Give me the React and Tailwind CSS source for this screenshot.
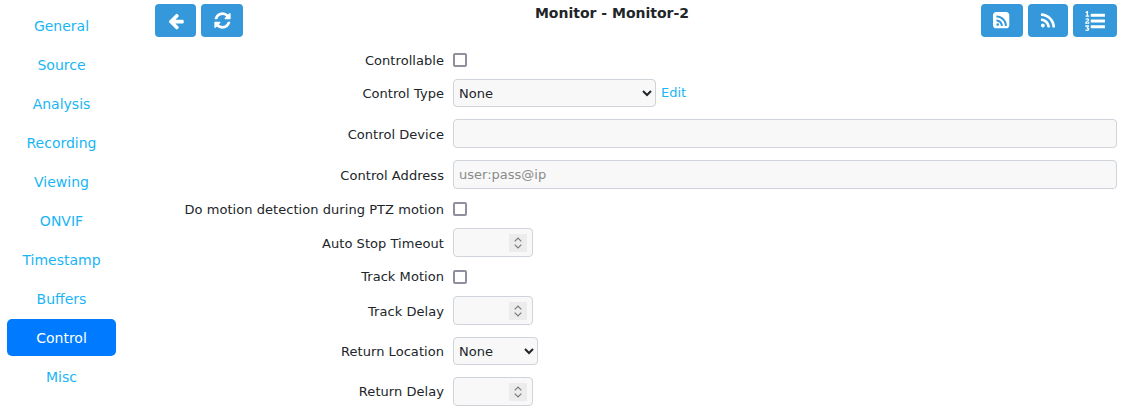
import React from "react";

const tabs = ["General","Source","Analysis","Recording","Viewing","ONVIF","Timestamp","Buffers","Control","Misc"];

const Icon = ({ size = 18, d }) => (
  <svg width={size} height={size} viewBox="0 0 1792 1792" fill="currentColor" aria-hidden="true"><path d={d} /></svg>
);

const ARROW = "M1664 896v128q0 53-32.5 90.5t-84.5 37.5h-704l293 294q38 36 38 90t-38 90l-75 76q-37 37-90 37-52 0-91-37l-651-652q-37-37-37-90 0-52 37-91l651-650q38-38 91-38 52 0 90 38l75 74q38 38 38 91t-38 91l-293 293h704q52 0 84.5 37.5t32.5 90.5z";
const REFRESH = "M1639 1056q0 5-1 7-64 268-268 434.5t-478 166.5q-146 0-282.5-55t-243.5-157l-129 129q-19 19-45 19t-45-19-19-45v-448q0-26 19-45t45-19h448q26 0 45 19t19 45-19 45l-137 137q71 66 161 102t187 36q134 0 250-65t186-179q11-17 53-117 8-23 30-23h192q13 0 22.5 9.5t9.5 22.5zm25-800v448q0 26-19 45t-45 19h-448q-26 0-45-19t-19-45 19-45l138-138q-148-137-349-137-134 0-250 65t-186 179q-11 17-53 117-8 23-30 23h-199q-13 0-22.5-9.5t-9.5-22.5v-7q65-268 270-434.5t480-166.5q146 0 284 55.5t245 156.5l130-129q19-19 45-19t45 19 19 45z";
const RSS_SQUARE = "M576 1280q0-53-37.5-90.5t-90.5-37.5-90.5 37.5-37.5 90.5 37.5 90.5 90.5 37.5 90.5-37.5 37.5-90.5zm352 94q-13-232-177-396t-396-177q-14-1-24 9t-10 23v128q0 13 8.5 22t21.5 10q154 11 264 121t121 264q1 13 10 21.5t22 8.5h128q13 0 23-10t9-24zm384 1q-5-154-56-297.5t-139.5-260-205-205-260-139.5-297.5-56q-14-1-23 9-10 10-10 23v128q0 13 9 22t22 10q204 7 378 111.5t278.5 278.5 111.5 378q1 13 10 22t22 9h128q13 0 23-10 11-9 9-23zm224-991v960q0 119-84.5 203.5t-203.5 84.5h-960q-119 0-203.5-84.5t-84.5-203.5v-960q0-119 84.5-203.5t203.5-84.5h960q119 0 203.5 84.5t84.5 203.5z";
const RSS = "M576 1344q0 80-56 136t-136 56-136-56-56-136 56-136 136-56 136 56 56 136zm512 123q2 28-17 48-18 21-47 21h-135q-25 0-43-16.5t-20-41.5q-22-229-184.5-391.5t-391.5-184.5q-25-2-41.5-20t-16.5-43v-135q0-29 21-47 17-17 43-17h5q160 13 306 80.5t259 181.5q114 113 181.5 259t80.5 306zm512 2q2 27-18 47-18 20-46 20h-143q-26 0-44.5-17.5t-19.5-42.5q-12-215-101-408.5t-231.5-336-336-231.5-408.5-102q-25-1-42.5-19.5t-17.5-43.5v-143q0-28 20-46 18-18 44-18h3q262 13 501.5 120t425.5 294q187 186 294 425.5t120 501.5z";
const LIST_OL = "M381 1620q0 80-54.5 126t-135.5 46q-106 0-172-66l57-88q49 45 106 45 29 0 50.5-14.5t21.5-42.5q0-64-105-56l-26-56q8-10 32.5-43.5t42.5-54 37-38.5v-1q-16 0-48.5 1t-48.5 1v53h-106v-152h333v88l-95 115q51 12 81 49t30 88zm2-627v159h-362q-6-36-6-54 0-51 23.5-93t56.5-68 66-47.5 56.5-43.5 23.5-45q0-25-14.5-38.5t-39.5-13.5q-46 0-81 58l-85-59q24-51 71.5-79.5t105.5-28.5q73 0 123 41.5t50 112.5q0 50-34 91.5t-75 64.5-75.5 50.5-35.5 52.5h127v-60h105zm1409 319v192q0 13-9.5 22.5t-22.5 9.5h-1216q-13 0-22.5-9.5t-9.5-22.5v-192q0-14 9-23t23-9h1216q13 0 22.5 9.5t9.5 22.5zm-1408-899v99h-335v-99h107q0-41 .5-122t.5-121v-12h-2q-8 17-50 54l-71-76 136-127h106v404h108zm1408 387v192q0 13-9.5 22.5t-22.5 9.5h-1216q-13 0-22.5-9.5t-9.5-22.5v-192q0-14 9-23t23-9h1216q13 0 22.5 9.5t9.5 22.5zm0-512v192q0 13-9.5 22.5t-22.5 9.5h-1216q-13 0-22.5-9.5t-9.5-22.5v-192q0-13 9.5-22.5t22.5-9.5h1216q13 0 22.5 9.5t9.5 22.5z";

const Btn = ({ w, children }) => (
  <button className={`${w} h-[33px] flex items-center justify-center rounded-[4px] bg-[#3498db] text-white`}>{children}</button>
);

const Row = ({ label, h, low, children }) => (
  <div className={`flex items-center ${h}`}>
    <label className={`w-[289px] shrink-0 text-right text-[13px] tracking-[0.05px] text-[#212529] ${low ? "pt-[2px]" : "pt-[1px]"}`}>{label}</label>
    <div className="ml-[9px] flex flex-1 items-center">{children}</div>
  </div>
);

const Check = () => (
  <input type="checkbox" className="h-[14px] w-[14px] appearance-none rounded-[2px] border-2 border-[#8f8f9d] bg-white" />
);

const boxCls = "rounded-[4px] border border-[#ced4da] bg-[#f8f8f8] text-[13px] text-[#212529]";

const Num = () => (
  <div className="relative h-[29px] w-[80px]">
    <input type="number" className={`${boxCls} h-full w-full appearance-none px-[5px] outline-none [appearance:textfield] [&::-webkit-inner-spin-button]:appearance-none`} />
    <span className="absolute left-[56px] top-[6px] flex h-[18px] w-[18px] flex-col items-center justify-center gap-[2px] bg-[#ececec]">
      <svg width="8" height="5" viewBox="0 0 8 5" fill="none" stroke="#7a7a7a" strokeWidth="1.2"><path d="M0.7 4.3 4 1l3.3 3.3" /></svg>
      <svg width="8" height="5" viewBox="0 0 8 5" fill="none" stroke="#7a7a7a" strokeWidth="1.2"><path d="M0.7 0.7 4 4l3.3-3.3" /></svg>
    </span>
  </div>
);

export default function App() {
  return (
    <div className="flex h-screen overflow-hidden bg-white font-['DejaVu_Sans',sans-serif]">
      <nav className="w-[155px] shrink-0 pl-[7px] pt-[7px]">
        <ul className="flex w-[109px] flex-col gap-[2px]">
          {tabs.map((t) => (
            <li key={t} className={`flex h-[37px] items-center justify-center rounded-[5px] pt-[1px] text-[14px] ${t === "Control" ? "bg-[#007bff] text-white" : "text-[#19b5f5]"}`}>{t}</li>
          ))}
        </ul>
      </nav>
      <main className="flex-1 pr-[12px]">
        <header className="relative flex h-[47px] items-start justify-between pt-[4px]">
          <div className="flex gap-[5px]">
            <Btn w="w-[41px]"><Icon d={ARROW} /></Btn>
            <Btn w="w-[42px]"><Icon d={REFRESH} size={19} /></Btn>
          </div>
          <h2 className="absolute left-0 right-[48px] top-[3px] text-center text-[14px] font-bold text-[#212529]">Monitor - Monitor-2</h2>
          <div className="flex gap-[5px]">
            <Btn w="w-[42px]"><Icon d={RSS_SQUARE} size={19} /></Btn>
            <Btn w="w-[40px]"><Icon d={RSS} /></Btn>
            <Btn w="w-[44px]"><Icon d={LIST_OL} size={20} /></Btn>
          </div>
        </header>
        <form>
          <Row label="Controllable" h="h-[26px]"><Check /></Row>
          <Row label="Control Type" h="h-[40px]">
            <select className={`${boxCls} h-[28px] w-[203px] pl-[1px]`}><option>None</option></select>
            <a className="ml-[5px] text-[13px] text-[#19b5f5]">Edit</a>
          </Row>
          <Row label="Control Device" h="h-[41px]" low><input className={`${boxCls} h-[29px] w-full px-[5px]`} /></Row>
          <Row label="Control Address" h="h-[41px]" low><input placeholder="user:pass@ip" className={`${boxCls} h-[29px] w-full px-[5px] placeholder:text-[#8a8a8a]`} /></Row>
          <Row label="Do motion detection during PTZ motion" h="h-[27px]" low><Check /></Row>
          <Row label="Auto Stop Timeout" h="h-[41px]" low><Num /></Row>
          <Row label="Track Motion" h="h-[27px]"><Check /></Row>
          <Row label="Track Delay" h="h-[41px]" low><Num /></Row>
          <Row label="Return Location" h="h-[40px]">
            <select className={`${boxCls} h-[28px] w-[85px] pl-[1px]`}><option>None</option></select>
          </Row>
          <Row label="Return Delay" h="h-[41px]"><Num /></Row>
        </form>
      </main>
    </div>
  );
}
